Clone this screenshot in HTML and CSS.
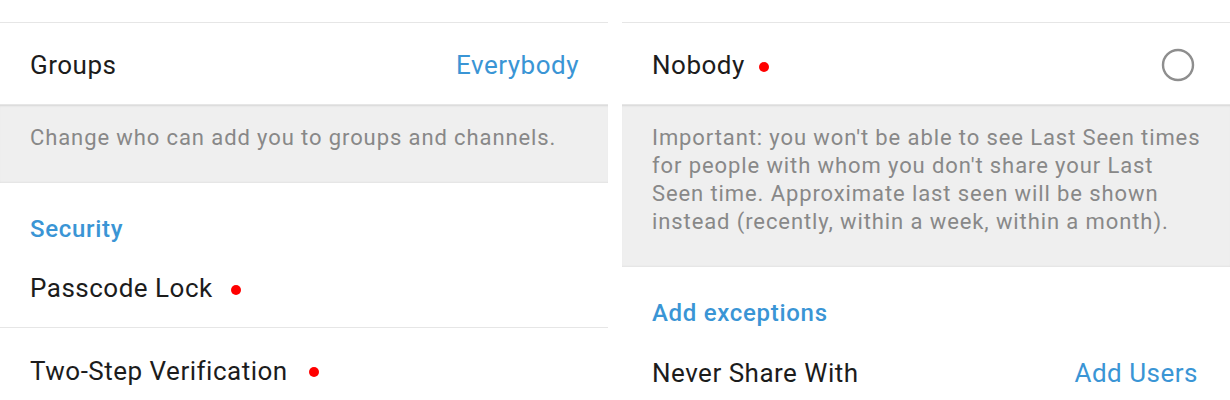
FILE: index.html
```html
<!DOCTYPE html>
<html>
<head>
<meta charset="utf-8">
<link rel="stylesheet" href="styles.css">
</head>
<body>
<div class="screen">
  <section class="panel">
    <div class="row row-cut"><span class="label">Profile Photo</span><span class="value">Everybody</span></div>
    <div class="row"><span class="label">Groups</span><span class="value">Everybody</span></div>
    <div class="info">Change who can add you to groups and channels.</div>
    <div class="header">Security</div>
    <div class="row"><span class="label">Passcode Lock</span><span class="dot dot-a"></span></div>
    <div class="row"><span class="label">Two-Step Verification</span><span class="dot dot-b"></span></div>
  </section>
  <section class="panel panel-right">
    <div class="row row-cut"><span class="label">My Contacts</span>
      <svg class="radio" width="34" height="34" viewBox="0 0 34 34"><circle cx="17" cy="17" r="15" fill="none" stroke="#8e8e8e" stroke-width="2.4"/></svg>
    </div>
    <div class="row"><span class="label">Nobody</span><span class="dot dot-c"></span>
      <svg class="radio" width="34" height="34" viewBox="0 0 34 34"><circle cx="17" cy="17" r="15" fill="none" stroke="#8e8e8e" stroke-width="2.4"/></svg>
    </div>
    <div class="info">Important: you won't be able to see Last Seen times for people with whom you don't share your Last Seen time. Approximate last seen will be shown instead (recently, within a week, within a month).</div>
    <div class="header">Add exceptions</div>
    <div class="row"><span class="label">Never Share With</span><span class="value">Add Users</span></div>
  </section>
</div>
</body>
</html>
```

FILE: styles.css
```css
html, body {
  margin: 0;
  padding: 0;
  background: #ffffff;
}

body {
  font-family: Roboto, "Liberation Sans", sans-serif;
  color: #1c1c1c;
  overflow: hidden;
}

.screen {
  display: flex;
  gap: 14px;
  width: 1230px;
  height: 400px;
  overflow: hidden;
}

.panel {
  width: 608px;
  display: flex;
  flex-direction: column;
  margin-top: -59px;
}

.row {
  box-sizing: border-box;
  height: 82px;
  flex: none;
  display: flex;
  align-items: center;
  padding: 3px 29px 0 30px;
  border-bottom: 1px solid #e6e6e6;
  font-size: 26px;
  line-height: 30px;
  letter-spacing: 0.5px;
}

.panel-right .row {
  padding-right: 32px;
}

.row:last-child {
  border-bottom: none;
}

.row.row-cut {
  padding-top: 4px;
  align-items: flex-start;
}

.label {
  color: #1c1c1c;
}

.value {
  margin-left: auto;
  color: #3a95d5;
}

.dot {
  width: 10px;
  height: 10px;
  border-radius: 50%;
  background: #ff0000;
  margin-top: 3px;
}

.dot-a { margin-left: 18px; }
.dot-b { margin-left: 21px; }
.dot-c { margin-left: 14px; }

.radio {
  margin-left: auto;
  margin-right: 3px;
  display: block;
}

.info {
  flex: none;
  background: #efefef;
  color: #888888;
  font-size: 22px;
  letter-spacing: 0.9px;
  line-height: 28px;
  padding: 19px 26px 31px 30px;
  box-shadow: inset 0 2px 2px -1px rgba(0, 0, 0, 0.10), inset 0 -2px 2px -1px rgba(0, 0, 0, 0.05);
}

.header {
  flex: none;
  color: #3a95d5;
  font-weight: 500;
  font-size: 24px;
  letter-spacing: 0.7px;
  line-height: 28px;
  padding: 32px 30px 3px;
}
```
